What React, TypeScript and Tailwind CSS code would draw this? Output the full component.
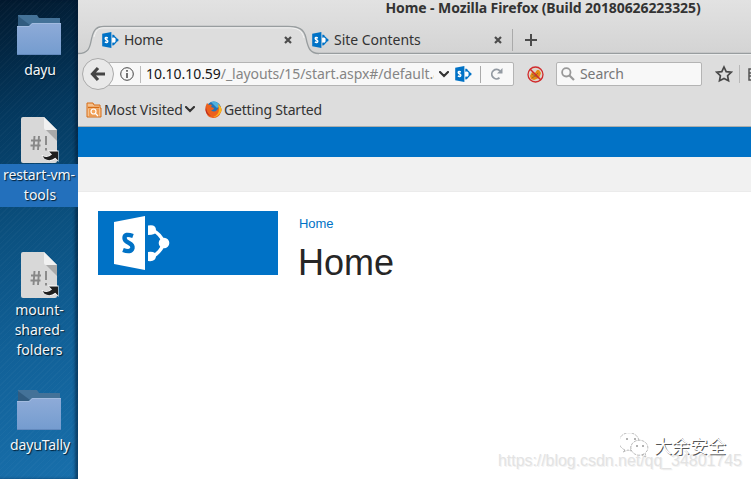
import type { ReactNode } from 'react';

const SANS = "font-['Noto_Sans','Open_Sans',sans-serif]";

function Folder() {
  return (
    <svg width="44" height="40" viewBox="0 0 44 40" className="block shrink-0">
      <defs>
        <linearGradient id="front" x1="0" y1="0" x2="0" y2="1">
          <stop offset="0" stopColor="#8eabd8" />
          <stop offset="1" stopColor="#749ccf" />
        </linearGradient>
      </defs>
      <path d="M1 0H20L22 3H43V14H1Z" fill="#447298" />
      <path d="M1 1L13 10L11 11H1Z" fill="#315c80" />
      <path d="M0 11H12L15 8H44V40H0Z" fill="url(#front)" />
      <path d="M0 11.5H12.3L15.3 8.5H44" fill="none" stroke="#a2bbe0" />
      <path d="M0 39.5H44" stroke="#6289bd" />
    </svg>
  );
}

function Script() {
  return (
    <svg width="38" height="46" viewBox="0 0 38 46" className="block shrink-0">
      <path d="M2 0H23L36 13V44Q36 46 34 46H2Q0 46 0 44V2Q0 0 2 0Z" fill="#d8d8d8" />
      <path d="M23 0L36 13H25Q23 13 23 11Z" fill="#f1f1f1" />
      <path d="M25 13H36V24Z" fill="#aaaaaa" />
      <path d="M13.5 19L12.5 33M18 19L17 33M10 23.5H20M9.5 28.5H19.5M25 19V28M25 31V33.5" fill="none" stroke="#888" strokeWidth="1.9" />
      <path d="M27 33.5H37.5V45L34.5 42Q29 46 22 41L20.5 38Q26 40.5 30 37.5Z" fill="#fff" />
      <path d="M28 34.5H37V43.5L34.3 40.8Q29 45 23.5 41.8L21.5 39Q27 41.5 31 37.5Z" fill="#1f1f1f" />
    </svg>
  );
}

function SharePoint({ light = false, className = '' }: { light?: boolean; className?: string }) {
  const c = light ? '#fff' : '#0072c6';
  const s = light ? '#0072c6' : '#fff';
  return (
    <svg viewBox="0 0 56 54" className={`block shrink-0 ${className}`}>
      <path d="M0 6L31 0V54L0 48Z" fill={c} />
      <path d="M19 20Q10.5 17 10.5 22Q10.5 25 15 27Q19 29 18.5 32Q17 37 9 34" fill="none" stroke={s} strokeWidth={light ? 4.4 : 5.4} />
      {!light && <path d="M34 10L42 15L51 27L42 40L34 44Z" fill="#fff" />}
      <path d="M38 14Q47 18 50 27Q47 36 38 41" fill="none" stroke={c} strokeWidth={light ? 3.5 : 4} />
      <path d="M34 9.5Q42 8 42 14Q43 19 34 19ZM34 36Q42 35 42 40Q42 46 34 45Z" fill={c} />
      <circle cx="50" cy="27" r="5.3" fill={c} />
    </svg>
  );
}

function Close({ className }: { className: string }) {
  return (
    <svg width="8" height="8" viewBox="0 0 8 8" className={`block shrink-0 ${className}`}>
      <path d="M1 1L7 7M7 1L1 7" stroke="#4c4c4c" strokeWidth="2.2" />
    </svg>
  );
}

function Chevron({ className = '' }: { className?: string }) {
  return (
    <svg width="10" height="7" viewBox="0 0 10 7" className={`block shrink-0 ${className}`}>
      <path d="M1 1L5 5L9 1" fill="none" stroke="#333" strokeWidth="2.1" strokeLinecap="round" />
    </svg>
  );
}

function Label({ children }: { children: ReactNode }) {
  return (
    <div className="w-full whitespace-nowrap text-center text-[14px] leading-5 text-[#f4f7fa] [text-shadow:1px_1px_1px_#001c30]">
      {children}
    </div>
  );
}

function Desktop() {
  return (
    <aside className="flex h-full w-[78px] shrink-0 flex-col items-center bg-[repeating-linear-gradient(135deg,#ffffff06_0px,#ffffff06_1px,transparent_1px,transparent_4px),linear-gradient(165deg,#02192e_0%,#04385e_23%,#0b5180_48%,#116097_70%,#186fab_100%)] pt-[15px] shadow-[inset_-3px_0_3px_#00152e80]">
      <Folder />
      <div className="mt-[5px] w-full pl-[2px]"><Label><span className="tracking-[-0.2px]">dayu</span></Label></div>
      <div className="mt-[37px] pl-[2px]"><Script /></div>
      <div className="mt-px h-[43px] w-full bg-[#2370bc] pt-px">
        <Label><span className="tracking-[-0.1px]">restart-vm-</span><br /><span className="pl-[2px]">tools</span></Label>
      </div>
      <div className="mt-[45px] pl-[2px]"><Script /></div>
      <div className="mt-[2px] w-full pl-px"><Label>mount-<br />shared-<br />folders</Label></div>
      <div className="mt-[30px]"><Folder /></div>
      <div className="mt-[5px] w-full pl-[2px]"><Label><span className="tracking-[-0.1px]">dayuTally</span></Label></div>
    </aside>
  );
}

function TabStrip() {
  return (
    <div className="relative flex h-[30px] items-center">
      <svg width="673" height="30" viewBox="0 0 673 30" className="absolute inset-0">
        <path d="M0 28.5C13 28.5 12 19 14 12C16 4 19 1.5 26 1.5H210C221 1.5 226 4 228 13C230 23 232 28.5 241 28.5H673V30H0Z" fill="#dddddd" />
        <path d="M0 28.5C13 28.5 12 19 14 12C16 4 19 1.5 26 1.5H210C221 1.5 226 4 228 13C230 23 232 28.5 241 28.5H673" fill="none" stroke="#989d9f" strokeWidth="1.3" />
        <path d="M16 12C18 5 20 2.8 26 2.8H210C219 2.8 224 5 226 13M241 29.7H673" fill="none" stroke="#f3f3f3" />
      </svg>
      <div className="relative flex h-full w-full items-center">
        <SharePoint className="ml-[24px] h-[16px] w-[17px]" />
        <span className="ml-[5px] w-[160px] pb-[2px] text-[14px] tracking-[-0.25px]">Home</span>
        <Close className="" />
        <SharePoint className="ml-[20px] h-[16px] w-[17px]" />
        <span className="ml-[5px] w-[160px] whitespace-nowrap pb-[2px] text-[14px] tracking-[-0.04px]">Site Contents</span>
        <Close className="" />
        <span className="ml-[10px] h-[22px] w-px bg-[#aaa]" />
        <svg width="12" height="12" viewBox="0 0 12 12" className="ml-[12px]">
          <path d="M0 6H12M6 0V12" stroke="#4b4b4b" strokeWidth="2" />
        </svg>
      </div>
    </div>
  );
}

function Toolbar() {
  return (
    <div className="flex h-[38px] items-center pl-[4px]">
      <div className="z-10 flex size-[32px] shrink-0 items-center justify-center rounded-full border border-[#aaa] bg-[#e9e9e9]">
        <svg width="16" height="16" viewBox="0 0 16 16">
          <path d="M8 2L2.5 8L8 14M3 8H15" fill="none" stroke="#444" strokeWidth="3.2" />
        </svg>
      </div>
      <div className="-ml-[6px] flex h-[24px] w-[406px] shrink-0 items-center rounded-[2px] border border-[#b4b4b4] bg-[#f8f8f8] pl-[11px]">
        <svg width="14" height="14" viewBox="0 0 14 14" className="shrink-0">
          <circle cx="7" cy="7" r="6.3" fill="none" stroke="#444" />
          <path d="M7 6V11M7 3V4.7" stroke="#444" strokeWidth="1.5" />
        </svg>
        <span className="ml-[6px] h-[17px] w-px shrink-0 bg-[#bbb]" />
        <div className="ml-[5px] w-[288px] shrink-0 overflow-hidden whitespace-nowrap text-[14px] leading-[22px] text-[#858585]">
          <span className="tracking-[-0.05px] text-[#151515]">10.10.10.59</span><span className="tracking-[-0.06px]">/_layouts/15/start.aspx#/default.a</span>
        </div>
        <Chevron className="ml-[5px]" />
        <SharePoint className="ml-[6px] h-[16px] w-[17px]" />
        <span className="ml-[8px] h-[17px] w-px shrink-0 bg-[#aaa]" />
        <svg width="12" height="12" viewBox="0 0 12 12" className="ml-[10px] shrink-0">
          <path d="M8.5 9.8A4.7 4.7 0 1 1 9 3" fill="none" stroke="#939aa2" strokeWidth="1.8" />
          <path d="M6 5.5H11.5V0Z" fill="#939aa2" />
        </svg>
      </div>
      <svg width="17" height="17" viewBox="0 0 17 17" className="ml-[13px] shrink-0">
        <circle cx="8.5" cy="8.5" r="7.3" fill="#ded4ca" />
        <path d="M3 10L5 6L8 7L10 4L12 4L14 7L12 12L7 14L4 13Z" fill="#e48b12" />
        <path d="M5 8L8 10L11 7M5 12L8 10L12 12" fill="none" stroke="#9c6730" />
        <circle cx="8.5" cy="8.5" r="7.5" fill="none" stroke="#d12b2d" strokeWidth="1.3" />
        <path d="M3 3L14 14" stroke="#d12b2d" strokeWidth="1.5" />
      </svg>
      <div className="ml-[12px] flex h-[24px] w-[146px] shrink-0 items-center rounded-[2px] border border-[#b4b4b4] bg-[#f8f8f8] pl-[4px] text-[14px] text-[#777]">
        <svg width="14" height="14" viewBox="0 0 14 14" className="mr-[5px]">
          <circle cx="5.3" cy="5.3" r="4.2" fill="none" stroke="#999" strokeWidth="1.8" />
          <path d="M8.5 8.5L13 13" stroke="#999" strokeWidth="2.2" />
        </svg>
        <span className="pb-[2px] tracking-[-0.1px]">Search</span>
      </div>
      <svg width="18" height="18" viewBox="0 0 18 18" className="ml-[13px] shrink-0">
        <path d="M9 2L11.2 6.6L16.2 7.2L12.6 10.7L13.5 15.8L9 13.4L4.5 15.8L5.4 10.7L1.8 7.2L6.8 6.6Z" fill="none" stroke="#484848" strokeWidth="1.7" />
      </svg>
      <span className="ml-[6px] h-[18px] w-px shrink-0 bg-[#b8b8b8]" />
      <svg width="4" height="14" viewBox="0 0 4 14" className="ml-[8px] shrink-0">
        <path d="M4 2H1V13H4M1 6H4M1 9H4" fill="none" stroke="#555" strokeWidth="1.5" />
      </svg>
    </div>
  );
}

function Bookmarks() {
  return (
    <div className="flex h-[34px] items-center border-b border-[#aaaead] pl-[8px] text-[14px]">
      <svg width="16" height="16" viewBox="0 0 16 16" className="shrink-0">
        <path d="M1 3V1H7L8 3H14V6H15V15H1Z" fill="#f5c18e" stroke="#d66d16" />
        <path d="M2 5.5H13" stroke="#d66d16" strokeWidth="1.5" />
        <rect x="3" y="7" width="10" height="7" fill="#ed9c52" />
        <circle cx="7.5" cy="9.5" r="2.5" fill="#f4a65e" stroke="#fff" strokeWidth="1.2" />
        <path d="M9.5 11.5L12 14" stroke="#fff" strokeWidth="1.3" />
      </svg>
      <span className="ml-[2px] w-[81px] whitespace-nowrap tracking-[-0.14px]">Most Visited</span>
      <Chevron />
      <svg width="17" height="17" viewBox="0 0 17 17" className="ml-[10px] shrink-0">
        <circle cx="8.7" cy="8" r="7.5" fill="#2474b5" />
        <path d="M6 1Q12-1 15 5L12 7L9 4Z" fill="#50b2dc" />
        <path d="M2 2L4 4Q5 3 7 4L6 6L9 7Q9 9 6 9Q9 12 12 9Q15 6 13 3Q18 7 16 11Q14 17 8 17Q1 16 .5 9Q.2 5 2 2Z" fill="#ed611c" />
        <path d="M13 3Q18 7 16 11Q13 16 8 16Q14 14 14 8Z" fill="#fbb719" />
        <path d="M1 5Q1 12 6 15Q1 14 .5 9Z" fill="#bd2c23" />
      </svg>
      <span className="ml-[2px] whitespace-nowrap tracking-[-0.18px]">Getting Started</span>
    </div>
  );
}

function Watermark() {
  return (
    <div className="absolute right-0 bottom-0 h-[55px] w-[260px]">
      <div className="absolute top-[27px] left-[7px] whitespace-nowrap font-['Liberation_Sans',sans-serif] text-[16px] leading-[20px] tracking-[-0.05px] text-[#e3e3e3] [text-shadow:1px_1px_0_#f3f3f3]">https://blog.csdn.net/qq_34801745</div>
      <svg width="29" height="25" viewBox="0 0 29 25" className="absolute top-[9px] left-[129px]">
        <g fill="#fff" stroke="#aaa" strokeWidth=".8" strokeDasharray="3 1">
          <path d="M5 17A10 9 0 1 1 19 8A8 8 0 0 0 11 18L8 17L3 19Z" />
          <path d="M24 21A8.5 7.5 0 1 1 27 18L25 20L26 24L22 22Z" />
        </g>
        <path d="M6 6H8M14 6H16M16 13H18M22 13H24" stroke="#666" />
      </svg>
      <div className="absolute top-[9px] left-[163px] whitespace-nowrap font-['Noto_Sans_CJK_SC',sans-serif] text-[18px] leading-[24px] text-white [text-shadow:1px_1px_0_#555]">大余安全</div>
    </div>
  );
}

export default function App() {
  return (
    <div className={`relative flex h-[479px] w-[751px] overflow-hidden bg-[#dddddd] text-[#333] ${SANS}`}>
      <Desktop />
      <main className="flex min-w-0 flex-1 flex-col">
        <div className="bg-gradient-to-b from-[#e2e2e2] to-[#d3d3d3]">
          <div className="flex h-[25px] justify-center pl-[257px] text-[14px] leading-[16px] font-bold whitespace-nowrap">
            <span className="tracking-[-0.09px]">Home - Mozilla Firefox (Build 20180626223325)</span>
          </div>
          <TabStrip />
        </div>
        <Toolbar />
        <Bookmarks />
        <div className="h-[30px] shrink-0 bg-[#0072c6]" />
        <div className="h-[35px] shrink-0 border-b border-[#ebebeb] bg-[#f1f1f1]" />
        <section className="flex flex-1 bg-white pt-[19px] pl-[20px] font-['Liberation_Sans',sans-serif]">
          <div className="h-[64px] w-[180px] bg-[#0072c6] pt-[5px] pl-[16px]">
            <SharePoint light className="h-[54px] w-[56px]" />
          </div>
          <div className="ml-[21px] pt-[4px]">
            <div className="text-[13px] leading-[17px] tracking-[-0.1px] text-[#0072c6]">Home</div>
            <h1 className="mt-[9px] -ml-px text-[36px] leading-[44px] text-[#262626]">Home</h1>
          </div>
        </section>
      </main>
      <Watermark />
    </div>
  );
}
